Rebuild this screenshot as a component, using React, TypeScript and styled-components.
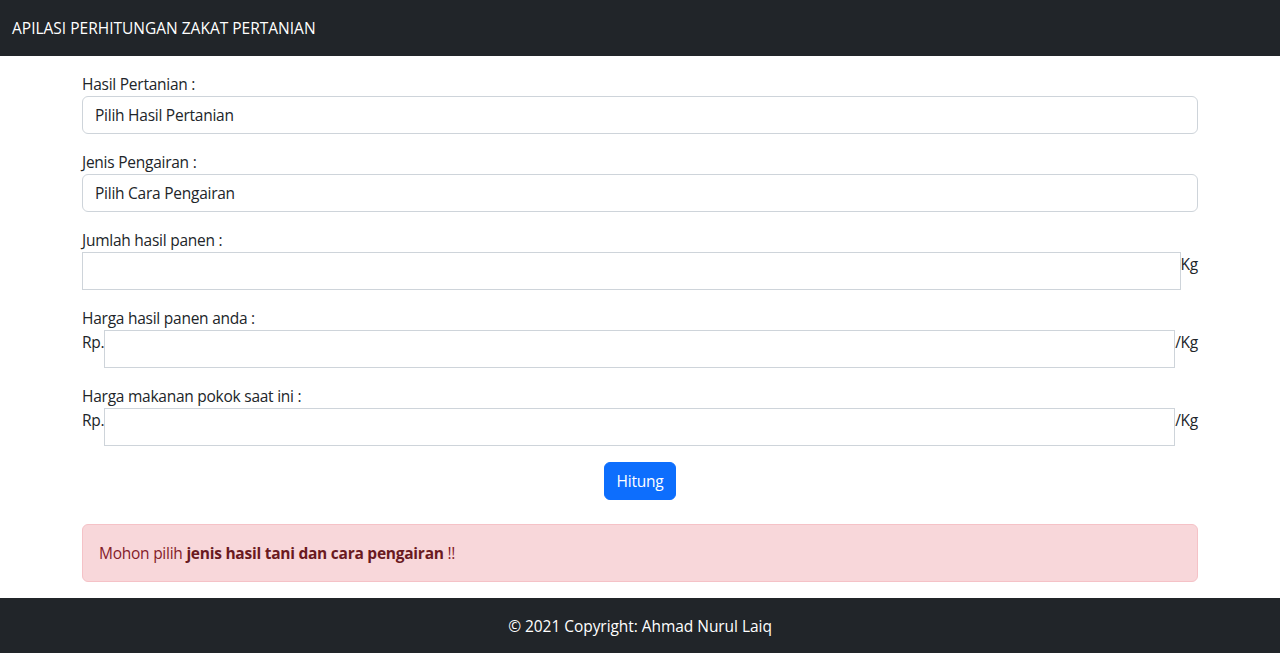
import React from "react";
import styled, { createGlobalStyle } from "styled-components";

const Global = createGlobalStyle`
  html, body { margin: 0; padding: 0; }
  body {
    font-family: "Open Sans", "Noto Sans", sans-serif;
    font-size: 15.5px;
    letter-spacing: -0.25px;
    line-height: 24px;
    color: #212529;
    background: #fff;
  }
  * { box-sizing: border-box; }
`;

const Navbar = styled.nav`
  height: 56px;
  background: #212529;
  display: flex;
  align-items: center;
  padding: 0 12px;
`;

const Brand = styled.div`
  color: #fff;
  letter-spacing: 0;
`;

const Container = styled.main`
  max-width: 1140px;
  margin: 0 auto;
  padding: 16px 12px 0;
  display: flex;
  flex-direction: column;
`;

const Field = styled.div`
  margin-bottom: 16px;
`;

const Label = styled.div`
  line-height: 24px;
`;

const SelectBox = styled.div`
  height: 38px;
  border: 1px solid #ced4da;
  border-radius: 6px;
  padding: 6px 12px;
  line-height: 24px;
  background: #fff;
`;

const InputRow = styled.div`
  display: flex;
  align-items: flex-start;
`;

const Input = styled.input`
  flex: 1;
  height: 38px;
  border: 1px solid #ced4da;
  border-radius: 0;
  padding: 6px 12px;
  font: inherit;
  min-width: 0;
  outline: none;
`;

const Affix = styled.span`
  line-height: 24px;
  white-space: nowrap;
`;

const ButtonWrap = styled.div`
  display: flex;
  justify-content: center;
  margin-bottom: 24px;
`;

const Button = styled.button`
  background: #0d6efd;
  color: #fff;
  border: 1px solid #0d6efd;
  border-radius: 6px;
  padding: 6px 12px;
  font: inherit;
  letter-spacing: inherit;
  line-height: 24px;
  cursor: pointer;
`;

const Alert = styled.div`
  background: #f8d7da;
  border: 1px solid #f5c2c7;
  color: #842029;
  border-radius: 6px;
  padding: 16px;
  margin-bottom: 16px;
  strong { font-weight: 700; color: #6a1a21; }
`;

const Footer = styled.footer`
  background: #212529;
  color: #fff;
  text-align: center;
  padding: 16px;
  letter-spacing: -0.05px;
`;

export default function App() {
  return (
    <>
      <Global />
      <Navbar>
        <Brand>APILASI PERHITUNGAN ZAKAT PERTANIAN</Brand>
      </Navbar>
      <Container>
        <Field>
          <Label>Hasil Pertanian :</Label>
          <SelectBox>Pilih Hasil Pertanian</SelectBox>
        </Field>
        <Field>
          <Label>Jenis Pengairan :</Label>
          <SelectBox>Pilih Cara Pengairan</SelectBox>
        </Field>
        <Field>
          <Label>Jumlah hasil panen :</Label>
          <InputRow>
            <Input type="text" />
            <Affix>Kg</Affix>
          </InputRow>
        </Field>
        <Field>
          <Label>Harga hasil panen anda :</Label>
          <InputRow>
            <Affix>Rp.</Affix>
            <Input type="text" />
            <Affix>/Kg</Affix>
          </InputRow>
        </Field>
        <Field>
          <Label>Harga makanan pokok saat ini :</Label>
          <InputRow>
            <Affix>Rp.</Affix>
            <Input type="text" />
            <Affix>/Kg</Affix>
          </InputRow>
        </Field>
        <ButtonWrap>
          <Button>Hitung</Button>
        </ButtonWrap>
        <Alert>
          Mohon pilih <strong>jenis hasil tani dan cara pengairan</strong> !!
        </Alert>
      </Container>
      <Footer>© 2021 Copyright: Ahmad Nurul Laiq</Footer>
    </>
  );
}
